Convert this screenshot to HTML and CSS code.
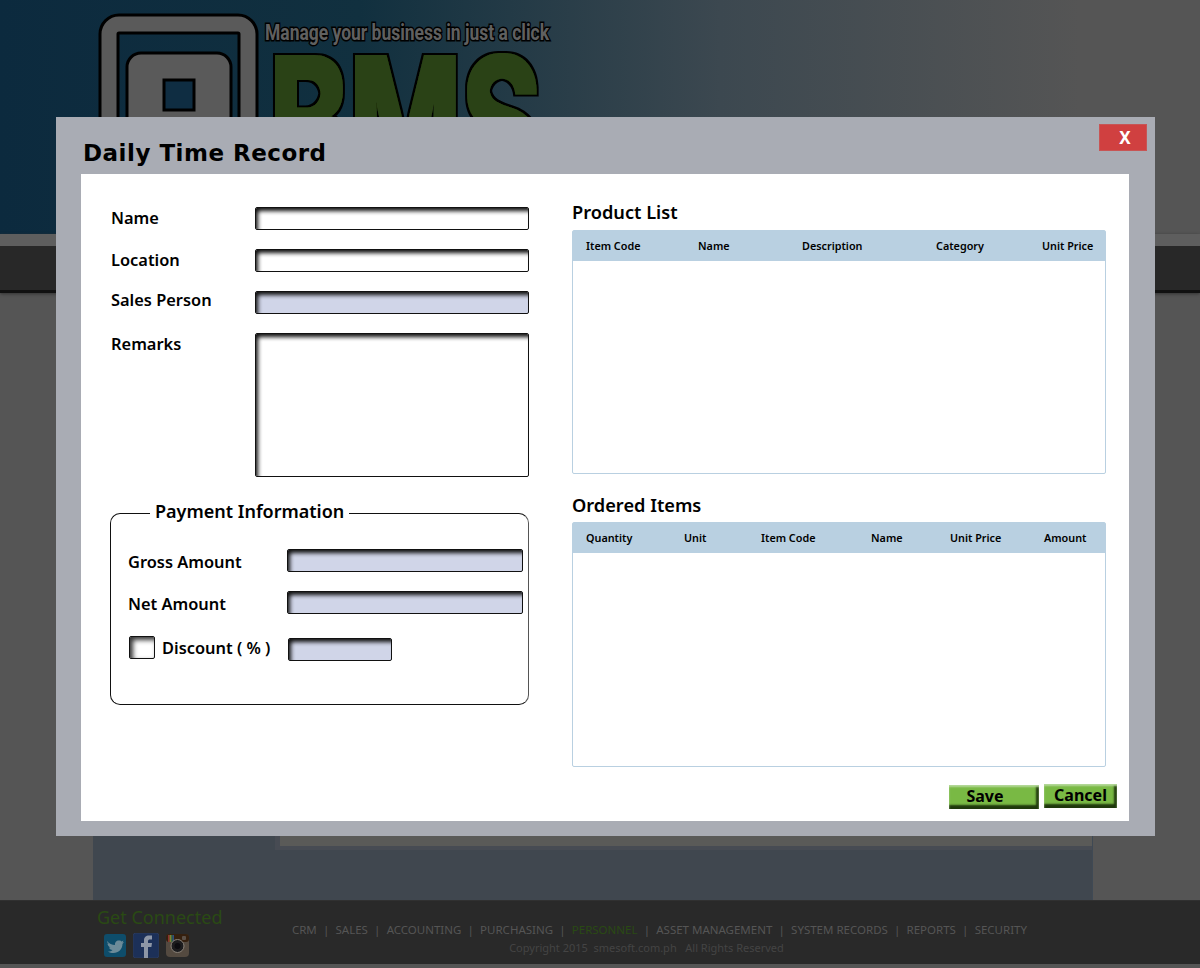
FILE: index.html
```html
<!DOCTYPE html>
<html lang="en">
<head>
    <meta charset="UTF-8">
    <meta name="viewport" content="width=device-width, initial-scale=1.0">
    <title>Daily Time Record</title>
    <link rel="stylesheet" href="styles.css">
</head>
<body>

<div class="page">
    <header class="site-header">
        <svg class="logo" width="470" height="210" viewBox="0 0 470 210">
            <defs>
                <!-- thickens the letters and adds the black outline -->
                <filter id="logo-fat" x="-5%" y="-5%" width="110%" height="110%">
                    <feMorphology in="SourceGraphic" operator="dilate" radius="2" result="fat"/>
                    <feMorphology in="SourceAlpha" operator="dilate" radius="4" result="edge"/>
                    <feMerge>
                        <feMergeNode in="edge"/>
                        <feMergeNode in="fat"/>
                    </feMerge>
                </filter>
            </defs>
            <rect x="14" y="12" width="139" height="200" rx="10" fill="none" stroke="#000" stroke-width="21"/>
            <rect x="14" y="12" width="139" height="200" rx="10" fill="none" stroke="#5a5a5a" stroke-width="15"/>
            <rect x="32" y="41" width="104" height="160" rx="14" fill="#5a5a5a" stroke="#000" stroke-width="3"/>
            <rect x="69" y="68" width="30" height="30" fill="#0f2d42" stroke="#000" stroke-width="3"/>
            <text class="logo-tag" x="170" y="28" textLength="284" lengthAdjust="spacingAndGlyphs">Manage your business in just a click</text>
            <text class="logo-name" x="174" y="170" textLength="272" lengthAdjust="spacingAndGlyphs" filter="url(#logo-fat)">BMS</text>
        </svg>
    </header>

    <nav class="menu-bar"></nav>

    <main class="main-area">
        <div class="wrap">
            <div class="wrap-panel"></div>
        </div>
    </main>

    <footer class="site-footer">
        <div class="social">
            <div class="social-title">Get Connected</div>
            <div class="social-icons">
                <svg width="22" height="23" viewBox="0 0 22 23">
                    <rect width="22" height="23" rx="3" fill="#0e4d6b"/>
                    <path d="M3 7c2 2.500 5 4 8 4 -.5-3 2-5 4.500-4.500 1 0 1.500.5 2 1l2-1 -1 2 1.500-.5 -1.500 2c0 5-4 9-9 9 -2 0-4-.5-5.500-1.500 2 0 3.500-.5 4.500-1.500 -2 0-3-1-3.500-2.500h1.500C4.500 12.500 3.500 11 3.500 9.500l1.500.5C3.500 9 3 8 3 7z" fill="#6c8b99"/>
                </svg>
                <svg width="26" height="25" viewBox="0 0 26 25">
                    <rect width="26" height="25" rx="3" fill="#1c3058" stroke="#2a3a5c"/>
                    <path d="M11 25V14H8v-4h3V7.500C11 4 13 2.500 16 2.500h3v4h-2c-1.300 0-2 .5-2 1.700V10h4l-.6 4H15v11z" fill="#8d96a6"/>
                </svg>
                <svg width="23" height="23" viewBox="0 0 23 23">
                    <rect width="23" height="23" rx="4" fill="#544a40"/>
                    <rect width="23" height="8" rx="3" fill="#35200f"/>
                    <rect x="2" y="1" width="1.500" height="7" fill="#8a3030"/>
                    <rect x="3.500" y="1" width="1.500" height="7" fill="#8a7a30"/>
                    <rect x="5" y="1" width="1.500" height="7" fill="#3a7040"/>
                    <rect x="6.500" y="1" width="1.500" height="7" fill="#305080"/>
                    <circle cx="11.500" cy="12" r="6.500" fill="#1c1c1e" stroke="#8a8278"/>
                    <circle cx="11.500" cy="12" r="3" fill="#0c0c10"/>
                    <rect x="16" y="2" width="4" height="4" rx="1" fill="#5a5048"/>
                </svg>
            </div>
        </div>
        <div class="footer-links">
            <div class="footer-nav">
                <a href="#">CRM</a><i>|</i><a href="#">SALES</a><i>|</i><a href="#">ACCOUNTING</a><i>|</i><a href="#">PURCHASING</a><i>|</i><a href="#" class="current">PERSONNEL</a><i>|</i><a href="#">ASSET MANAGEMENT</a><i>|</i><a href="#">SYSTEM RECORDS</a><i>|</i><a href="#">REPORTS</a><i>|</i><a href="#">SECURITY</a>
            </div>
            <div class="copyright">Copyright 2015 &nbsp;smesoft.com.ph &nbsp; All Rights Reserved</div>
        </div>
    </footer>
</div>

<!-- Popup -->
<div class="overlay">
    <div class="modal">
        <button class="close-btn">X</button>
        <h1 class="modal-title">Daily Time Record</h1>

        <div class="modal-body">
            <div class="col-left">
                <div class="form-row">
                    <label class="form-label">Name</label>
                    <input type="text" class="field">
                </div>
                <div class="form-row">
                    <label class="form-label">Location</label>
                    <input type="text" class="field">
                </div>
                <div class="form-row">
                    <label class="form-label label-up">Sales Person</label>
                    <input type="text" class="field readonly">
                </div>
                <div class="form-row row-top">
                    <label class="form-label label-remarks">Remarks</label>
                    <textarea class="field field-area"></textarea>
                </div>

                <fieldset class="payment">
                    <legend>Payment Information</legend>
                    <div class="pay-row">
                        <label class="pay-label">Gross Amount</label>
                        <input type="text" class="field readonly pay-field">
                    </div>
                    <div class="pay-row">
                        <label class="pay-label">Net Amount</label>
                        <input type="text" class="field readonly pay-field">
                    </div>
                    <div class="pay-row discount-row">
                        <span class="check"></span>
                        <label class="pay-label discount-label">Discount ( % )</label>
                        <input type="text" class="field readonly discount-field">
                    </div>
                </fieldset>
            </div>

            <div class="col-right">
                <h2 class="section-title">Product List</h2>
                <div class="list-table">
                    <div class="list-head head-products">
                        <span>Item Code</span><span>Name</span><span>Description</span><span>Category</span><span>Unit Price</span>
                    </div>
                </div>

                <h2 class="section-title second">Ordered Items</h2>
                <div class="list-table tall">
                    <div class="list-head head-orders">
                        <span>Quantity</span><span>Unit</span><span>Item Code</span><span>Name</span><span>Unit Price</span><span>Amount</span>
                    </div>
                </div>

                <div class="actions">
                    <button class="green-btn save-btn">Save</button>
                    <button class="green-btn cancel-btn">Cancel</button>
                </div>
            </div>
        </div>
    </div>
</div>

</body>
</html>
```

FILE: styles.css
```css
html, body {
    margin: 0;
    height: 968px;
    overflow: hidden;
}

body {
    font-family: "Noto Sans", "Open Sans", sans-serif;
    color: #000;
    background: #555;
}

.page {
    display: flex;
    flex-direction: column;
    height: 968px;
}

/* Page behind the popup (already dimmed) */
.site-header {
    height: 234px;
    padding: 12px 0 0 95px;
    box-sizing: border-box;
    overflow: hidden;
    background: linear-gradient(90deg, #0c2a3e 0%, #11303f 30%, #3c4850 60%, #555 90%);
}

.logo {
    display: block;
    overflow: visible;
}

.logo-tag {
    font-family: Roboto, sans-serif;
    font-weight: 700;
    font-size: 22px;
    fill: #606060;
    stroke: #000;
    stroke-width: 3px;
    paint-order: stroke;
}

.logo-name {
    font-family: Inter, sans-serif;
    font-weight: 700;
    font-size: 172px;
    fill: #2c4317;
}

.menu-bar {
    height: 59px;
    background: #282828;
    border-top: 12px solid #5e5e5e;
    border-bottom: 3px solid #111;
    box-sizing: border-box;
    box-shadow: 0 1px 3px #333;
}

.main-area {
    flex: 1;
}

.wrap {
    width: 1000px;
    height: 100%;
    margin-left: 93px;
    background: #40474f;
    border-right: 1px solid #3f4954;
    box-sizing: border-box;
}

.wrap-panel {
    height: 557px;
    margin-left: 182px;
    background: #5a5a58;
    border-left: 5px solid #474b53;
    border-bottom: 4px solid #474b53;
    box-sizing: border-box;
}

.site-footer {
    display: flex;
    height: 64px;
    margin-bottom: 4px;
    padding-left: 97px;
    box-sizing: border-box;
    background: #292929;
    border-top: 1px solid #303030;
}

.social-title {
    margin-top: 3px;
    font-size: 18px;
    line-height: 26px;
    color: #2a4a14;
}

.social-icons {
    display: flex;
    align-items: center;
    gap: 7px;
    margin: 3px 0 0 7px;
}

.social-icons svg {
    display: block;
}

.footer-links {
    width: 800px;
    margin-left: 37px;
    text-align: center;
}

.footer-nav {
    margin-top: 21px;
    font-size: 11.500px;
    line-height: 16px;
    color: #555;
}

.footer-nav a {
    color: #555;
    text-decoration: none;
}

.footer-nav a.current {
    color: #2a4a14;
}

.footer-nav i {
    margin: 0 6.200px;
    font-style: normal;
}

.copyright {
    margin-top: 2px;
    padding-right: 26px;
    font-size: 11px;
    line-height: 16px;
    color: #444;
}

/* Popup */
.overlay {
    position: absolute;
    left: 56px;
    top: 117px;
}

.modal {
    width: 1099px;
    height: 719px;
    padding: 57px 25px 15px;
    box-sizing: border-box;
    background: #a9acb4;
    position: relative;
}

.close-btn {
    position: absolute;
    right: 8px;
    top: 7px;
    width: 48px;
    height: 27px;
    padding: 0 0 0 4px;
    border: 1px solid #c75555;
    background: #d04040;
    color: #fff;
    font-family: "Noto Sans", sans-serif;
    font-size: 17px;
    font-weight: bold;
}

.modal-title {
    position: absolute;
    left: 27px;
    top: 21px;
    margin: 0;
    font-family: "DejaVu Sans", sans-serif;
    font-size: 23px;
    font-weight: 700;
    line-height: 30px;
    letter-spacing: 0.500px;
}

.modal-body {
    display: flex;
    gap: 43px;
    height: 647px;
    width: 1048px;
    padding: 33px 0 0 29px;
    box-sizing: border-box;
    background: #fff;
}

.col-left {
    width: 419px;
}

.form-row {
    display: flex;
    align-items: center;
    margin-bottom: 19px;
}

.row-top {
    align-items: flex-start;
    margin-bottom: 0;
}

.form-label {
    width: 145px;
    padding: 0 0 2px 1px;
    box-sizing: border-box;
    font-size: 16.400px;
    font-weight: 600;
    line-height: 18px;
}

.label-up {
    margin-top: -3px;
}

.label-remarks {
    margin-top: 2px;
}

.field {
    display: block;
    width: 275px;
    height: 23px;
    padding: 0;
    box-sizing: border-box;
    border: 1px solid #111;
    border-radius: 2px;
    background: #fff;
    box-shadow: inset 3px 4px 4px -1px #111;
    outline: none;
}

.field.readonly {
    background: #d0d5e8;
}

.field-area {
    height: 144px;
    resize: none;
}

.payment {
    height: 192px;
    margin: 36px 0 0;
    padding: 0;
    box-sizing: border-box;
    border: 1px solid #111;
    border-right-color: #555;
    border-radius: 10px;
}

.payment legend {
    position: relative;
    top: -3px;
    margin-left: 39px;
    padding: 0 5px;
    font-size: 18px;
    font-weight: 600;
    line-height: 0;
}

.pay-row {
    display: flex;
    align-items: center;
    margin-bottom: 19px;
    padding-left: 17px;
}

.pay-row:first-of-type {
    margin-top: 35px;
}

.pay-label {
    width: 159px;
    padding-top: 2px;
    font-size: 16.400px;
    font-weight: 600;
    line-height: 18px;
}

.pay-field {
    width: 236px;
}

.discount-row {
    margin-top: 24px;
    padding-left: 18px;
}

.check {
    width: 26px;
    height: 23px;
    box-sizing: border-box;
    border: 1px solid #111;
    border-radius: 2px;
    box-shadow: inset 3px 3px 5px #333;
    position: relative;
    top: -2px;
}

.discount-label {
    width: 126px;
    margin-left: 7px;
    padding-top: 0;
    position: relative;
    top: -2px;
}

.discount-field {
    width: 104px;
}

.col-right {
    width: 534px;
}

.section-title {
    margin: -7px 0 6px;
    font-size: 18.200px;
    font-weight: 600;
    line-height: 24px;
}

.section-title.second {
    margin: 19px 0 5px;
}

.list-table {
    height: 244px;
    box-sizing: border-box;
    border: 1px solid #b9d0e1;
    border-radius: 2px;
}

.list-table.tall {
    height: 245px;
}

.list-head {
    display: grid;
    align-items: center;
    height: 30px;
    padding: 0 0 2px 13px;
    box-sizing: border-box;
    background: #b9d0e1;
    font-size: 10.800px;
    font-weight: 600;
}

.head-products {
    grid-template-columns: 112px 104px 134px 106px auto;
}

.head-orders {
    grid-template-columns: 98px 77px 110px 79px 94px auto;
}

.actions {
    display: flex;
    align-items: flex-start;
    justify-content: flex-end;
    gap: 5px;
    margin: 17px -11px 0 0;
}

.green-btn {
    height: 24px;
    padding: 0 0 2px;
    border: 0;
    background: #79b944;
    box-shadow: inset 0 2px 2px #b5d89a, inset -3px -4px 2px #1f380c;
    color: #000;
    font-family: "Noto Sans", sans-serif;
    font-size: 16px;
    font-weight: 700;
}

.save-btn {
    width: 90px;
    margin-top: 1px;
    padding-right: 18px;
}

.cancel-btn {
    width: 73px;
}
```
